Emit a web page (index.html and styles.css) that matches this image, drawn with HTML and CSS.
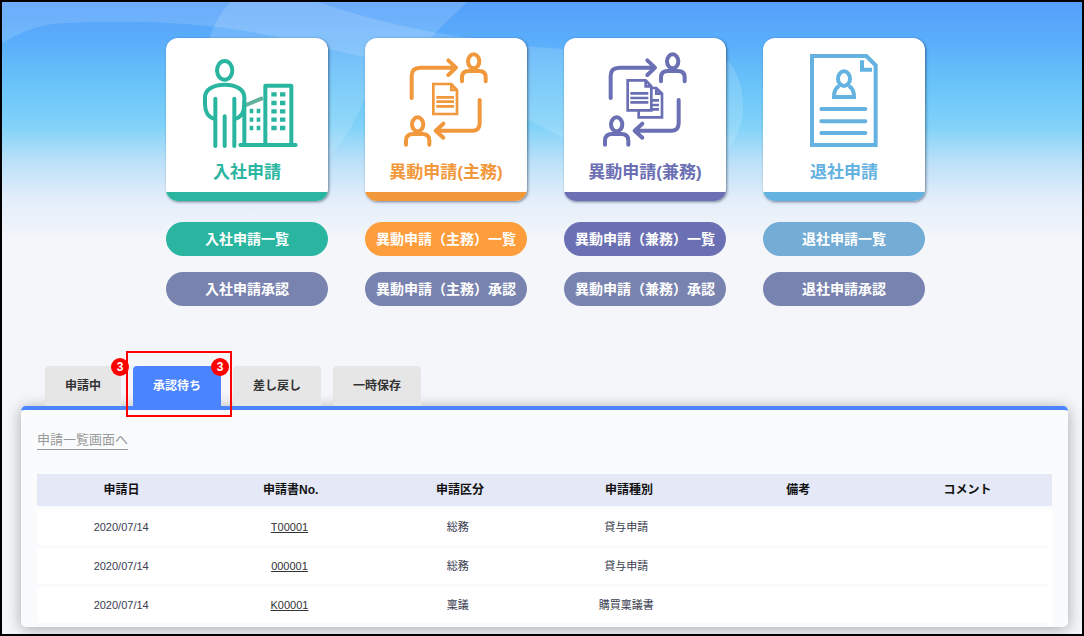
FILE: index.html
```html
<!DOCTYPE html>
<html lang="ja">
<head>
<meta charset="utf-8">
<title>申請ポータル</title>
<link rel="stylesheet" href="styles.css">
</head>
<body>
<div class="page">
  <svg class="waves" viewBox="0 0 1084 240" preserveAspectRatio="none" aria-hidden="true">
    <path class="wave" d="M0 0V41Q25 26 50 22C130 17 210 19 290 38Q330 48 364 55C440 76 480 96 528 118Q620 165 680 184Q744 150 744 106Q744 78 730 60Q690 48 563 47Q500 43 475 37Q390 25 317 0Z"/>
    <path class="wave" d="M229 0Q213 18 208 38Q200 180 290 180Q340 160 364 96Q390 70 430 36Q452 14 467 0Z"/>
  </svg>
  <main class="main">
    <nav class="menu" aria-label="申請メニュー">
      <div class="menu-item join">
        <a class="card" href="#">
          <svg class="icon" viewBox="32 30 486 354" aria-hidden="true">
            <ellipse cx="208" cy="127" rx="23" ry="28"/>
            <path d="M180 212V354M237 212V354M208 265V354M180 272C158 270 149 250 149 229V208C149 186 172 170 208 170S267 186 267 208V229C267 250 258 270 237 272"/>
            <path class="roof" d="M272 231L318 212"/>
            <path d="M267 222V350M330 350V173H408V350M255 351H421"/>
            <g class="windows">
              <path d="M348 199H364M374 199H390M348 225H364M374 225H390M348 250H364M374 250H390M348 275H364M374 275H390M348 300H364M374 300H390"/>
              <path d="M283 249H294M304 249H315M283 275H294M304 275H315M283 300H294M304 300H315"/>
            </g>
          </svg>
          <span class="card-title">入社申請</span>
        </a>
        <a class="pill list" href="#">入社申請一覧</a>
        <a class="pill approve" href="#">入社申請承認</a>
      </div>
      <div class="menu-item move-main">
        <a class="card" href="#">
          <svg class="icon" viewBox="29 30 486 354" aria-hidden="true">
            <path d="M169 210V143Q169 119 195 119H300M279 97L302 119L279 141M373 216V285Q373 308 353 308H243M264 287L241 308L264 329"/>
            <ellipse cx="355" cy="100" rx="17" ry="21"/>
            <path d="M320 160V148Q320 129 341 129H370Q391 129 391 148V160"/>
            <ellipse cx="187" cy="289" rx="17" ry="21"/>
            <path d="M152 350V338Q152 318 173 318H201Q222 318 222 338V350"/>
            <g class="paper">
              <path d="M234 168H288L305 186V258H234ZM288 168V186H305"/>
              <path d="M243 208H296M243 221H296M243 235H296"/>
            </g>
          </svg>
          <span class="card-title">異動申請(主務)</span>
        </a>
        <a class="pill list" href="#">異動申請（主務）一覧</a>
        <a class="pill approve" href="#">異動申請（主務）承認</a>
      </div>
      <div class="menu-item move-sub">
        <a class="card" href="#">
          <svg class="icon" viewBox="26 30 486 354" aria-hidden="true">
            <path d="M166 210V143Q166 119 192 119H297M276 97L299 119L276 141M370 216V285Q370 308 350 308H240M261 287L238 308L261 329"/>
            <ellipse cx="352" cy="100" rx="17" ry="21"/>
            <path d="M317 160V148Q317 129 338 129H367Q388 129 388 148V160"/>
            <ellipse cx="184" cy="289" rx="17" ry="21"/>
            <path d="M149 350V338Q149 318 170 318H198Q219 318 219 338V350"/>
            <g class="paper">
              <path d="M217 157H271L288 175V247H217ZM271 157V175H288"/>
              <path d="M225 196H279M225 210H279M225 223H279"/>
              <path d="M250 247V268H320V197L303 180H288M303 180V197H320M289 217H311M289 231H311M289 244H311"/>
            </g>
          </svg>
          <span class="card-title">異動申請(兼務)</span>
        </a>
        <a class="pill list" href="#">異動申請（兼務）一覧</a>
        <a class="pill approve" href="#">異動申請（兼務）承認</a>
      </div>
      <div class="menu-item leave">
        <a class="card" href="#">
          <svg class="icon" viewBox="28 30 486 354" aria-hidden="true">
            <path class="sheet" d="M175 84H338L366 112V351H175ZM325 97V125H355"/>
            <ellipse cx="271" cy="152" rx="18" ry="22"/>
            <path class="sheet" d="M257 174Q241 181 241 207H301Q301 181 285 174"/>
            <path d="M203 243H335M203 280H335M203 315H335"/>
          </svg>
          <span class="card-title">退社申請</span>
        </a>
        <a class="pill list" href="#">退社申請一覧</a>
        <a class="pill approve" href="#">退社申請承認</a>
      </div>
    </nav>

    <div class="tabs" role="tablist">
      <button class="tab" type="button" role="tab">申請中<span class="badge">3</span></button>
      <button class="tab active" type="button" role="tab" aria-selected="true">承認待ち<span class="badge">3</span><span class="focus-frame"></span></button>
      <button class="tab" type="button" role="tab">差し戻し</button>
      <button class="tab" type="button" role="tab">一時保存</button>
    </div>

    <section class="panel">
      <a class="to-list" href="#">申請一覧画面へ</a>
      <table class="requests">
        <thead>
          <tr><th>申請日</th><th>申請書No.</th><th>申請区分</th><th>申請種別</th><th>備考</th><th>コメント</th></tr>
        </thead>
        <tbody>
          <tr><td>2020/07/14</td><td><a href="#">T00001</a></td><td>総務</td><td>貸与申請</td><td></td><td></td></tr>
          <tr><td>2020/07/14</td><td><a href="#">000001</a></td><td>総務</td><td>貸与申請</td><td></td><td></td></tr>
          <tr><td>2020/07/14</td><td><a href="#">K00001</a></td><td>稟議</td><td>購買稟議書</td><td></td><td></td></tr>
        </tbody>
      </table>
    </section>
  </main>
</div>
</body>
</html>
```

FILE: styles.css
```css
* {
  box-sizing: border-box;
}

body {
  margin: 0;
  font-family: "Liberation Sans", "Noto Sans CJK JP", sans-serif;
  font-size: 12px;
  color: #333;
}

a {
  color: inherit;
  text-decoration: none;
}

.page {
  position: relative;
  min-height: 100vh;
  border: 2px solid #000;
  overflow: hidden;
  background: #f4f6fa linear-gradient(#559ffb 0, #5aaefb 40px, #6ac4f8 84px, #80d2f9 124px, #b8e0f8 158px, #e4eefa 198px, #f4f6fa 240px) no-repeat;
}

.waves {
  position: absolute;
  top: 0;
  left: 0;
  width: 100%;
  height: 240px;
}

.wave {
  fill: #fff;
  fill-opacity: 0.14;
}

.main {
  position: relative;
  padding: 36px 14px 7px 19px;
}

.menu {
  display: flex;
  justify-content: center;
  gap: 37px;
  padding-left: 2px;
}

.menu-item {
  display: flex;
  flex-direction: column;
  width: 162px;
}

.card {
  display: flex;
  flex-direction: column;
  margin-bottom: 21px;
  border-radius: 12px;
  overflow: hidden;
  background: #fff;
  box-shadow: 1px 1px 3px rgba(0, 20, 50, 0.5);
}

.card::after {
  content: "";
  height: 9px;
  background: currentColor;
}

.icon {
  display: block;
  width: 100%;
  height: 118px;
  fill: none;
  stroke: currentColor;
  stroke-width: 12;
  stroke-linecap: round;
  stroke-linejoin: round;
}

.icon .windows {
  stroke-width: 13;
  stroke-linecap: butt;
}

.icon .roof {
  stroke: #62b19c;
}

.icon .paper {
  stroke-width: 8;
  stroke-linecap: butt;
  stroke-linejoin: miter;
}

.icon .sheet {
  stroke-linecap: butt;
  stroke-linejoin: miter;
}

.card-title {
  padding: 5px 0 7px;
  font-size: 17px;
  font-weight: 700;
  line-height: 24px;
  text-align: center;
}

.join .card { color: #2ab5a0; }
.join .list { background: #2ab5a0; }
.move-main .card { color: #f2983c; }
.move-main .list { background: #fd9d3b; }
.move-sub .card { color: #6b6fb3; }
.move-sub .list { background: #6b6fb3; }
.leave .card { color: #64b2df; }
.leave .list { background: #73acd4; }

.pill {
  border-radius: 17px;
  font-size: 14px;
  font-weight: 700;
  line-height: 34px;
  text-align: center;
  white-space: nowrap;
  color: #fff;
}

.pill.approve {
  margin-top: 16px;
  background: #7983b0;
}

.tabs {
  display: flex;
  gap: 12px;
  margin-top: 60px;
  padding-left: 24px;
}

.tab {
  position: relative;
  height: 40px;
  padding: 0 20px 3px;
  border: 0;
  border-radius: 4px 4px 0 0;
  background: #e6e6e6;
  font: inherit;
  font-weight: 700;
  color: #333;
}

.tab.active {
  z-index: 1;
  background: #4b84ff;
  color: #fff;
}

.badge {
  position: absolute;
  top: -8px;
  right: -8px;
  width: 18px;
  height: 18px;
  border-radius: 50%;
  background: #f00;
  line-height: 18px;
  text-align: center;
  color: #fff;
}

.focus-frame {
  position: absolute;
  inset: -15px -11px -11px -7px;
  border: 2px solid #f00;
}

.panel {
  border-top: 4px solid #4b84ff;
  border-radius: 5px;
  padding: 21px 16px 1px;
  background: #fafbfd;
  box-shadow: 0 2px 15px rgba(0, 0, 0, 0.32);
}

.to-list {
  display: table;
  margin-bottom: 24px;
  border-bottom: 1px solid #999;
  font-size: 13px;
  line-height: 18px;
  color: #999;
}

.requests {
  display: block;
  text-align: center;
}

.requests thead,
.requests tbody {
  display: block;
}

.requests thead {
  margin-bottom: 3px;
  background: #e4e8f7;
  color: #111;
}

.requests tbody {
  padding-right: 5px;
  background: #fff;
  font-size: 11px;
  color: #3a3d50;
}

.requests tr {
  display: grid;
  grid-template-columns: repeat(6, 1fr);
}

.requests th {
  padding: 0;
  line-height: 32px;
}

.requests td {
  height: 39px;
  padding: 0;
  border-bottom: 3px solid #fafafc;
  line-height: 36px;
}

.requests td a {
  color: #333;
  text-decoration: underline;
}
```
